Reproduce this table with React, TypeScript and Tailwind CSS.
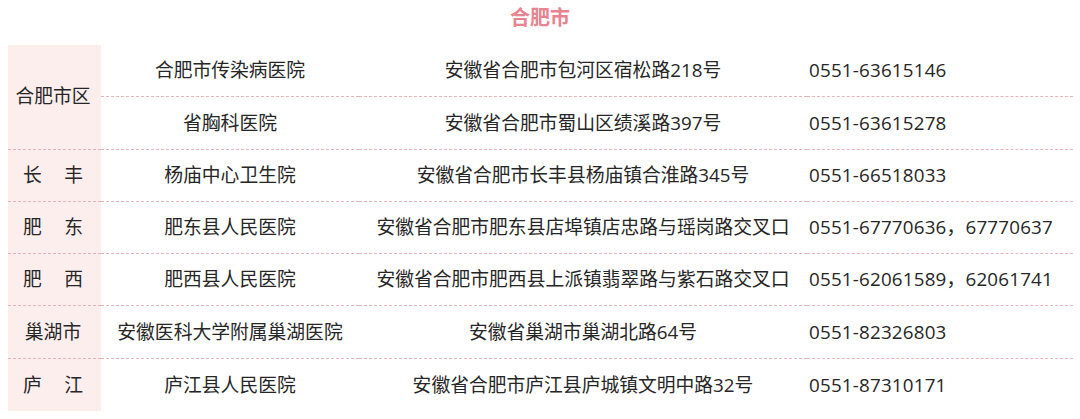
import React from "react"

type Row = { area?: string; spaced?: boolean; span?: number; hospital: string; address: string; phone: string }

const ROWS: Row[] = [
  { area: "合肥市区", span: 2, hospital: "合肥市传染病医院", address: "安徽省合肥市包河区宿松路218号", phone: "0551-63615146" },
  { hospital: "省胸科医院", address: "安徽省合肥市蜀山区绩溪路397号", phone: "0551-63615278" },
  { area: "长丰", spaced: true, hospital: "杨庙中心卫生院", address: "安徽省合肥市长丰县杨庙镇合淮路345号", phone: "0551-66518033" },
  { area: "肥东", spaced: true, hospital: "肥东县人民医院", address: "安徽省合肥市肥东县店埠镇店忠路与瑶岗路交叉口", phone: "0551-67770636，67770637" },
  { area: "肥西", spaced: true, hospital: "肥西县人民医院", address: "安徽省合肥市肥西县上派镇翡翠路与紫石路交叉口", phone: "0551-62061589，62061741" },
  { area: "巢湖市", hospital: "安徽医科大学附属巢湖医院", address: "安徽省巢湖市巢湖北路64号", phone: "0551-82326803" },
  { area: "庐江", spaced: true, hospital: "庐江县人民医院", address: "安徽省合肥市庐江县庐城镇文明中路32号", phone: "0551-87310171" },
]

const line = "border-b border-dashed border-[#e6b3bb]"

export default function App() {
  return (
    <div
      className="w-[1080px] h-[419px] bg-white text-[#262626] overflow-hidden"
      style={{ fontFamily: '"Open Sans", "Noto Sans CJK SC", sans-serif' }}
    >
      <div className="h-[45px] flex justify-center pt-[5px]">
        <h1 className="text-[20px] leading-[26px] font-bold text-[#e8838f]">合肥市</h1>
      </div>
      <div className="ml-[8px] grid grid-cols-[93px_258px_448px_266px] auto-rows-[52.3px] text-[18.8px] leading-none">
        {ROWS.map((r, i) => {
          const last = i === ROWS.length - 1
          const b = last ? "" : line
          return (
            <React.Fragment key={i}>
              {r.area && (
                <div
                  className={`bg-[#fdeeee] flex items-center justify-center pr-[3px] ${b} ${r.span === 2 ? "row-span-2" : ""}`}
                >
                  {r.spaced ? (
                    <span className="w-[60px] flex justify-between">
                      <span>{r.area[0]}</span>
                      <span>{r.area[1]}</span>
                    </span>
                  ) : (
                    <span>{r.area}</span>
                  )}
                </div>
              )}
              <div className={`flex items-center justify-center ${b}`}>{r.hospital}</div>
              <div className={`flex items-center justify-center ${b}`}>{r.address}</div>
              <div className={`flex items-center pl-[2px] tracking-[0.2px] ${b}`}>{r.phone}</div>
            </React.Fragment>
          )
        })}
      </div>
    </div>
  )
}
